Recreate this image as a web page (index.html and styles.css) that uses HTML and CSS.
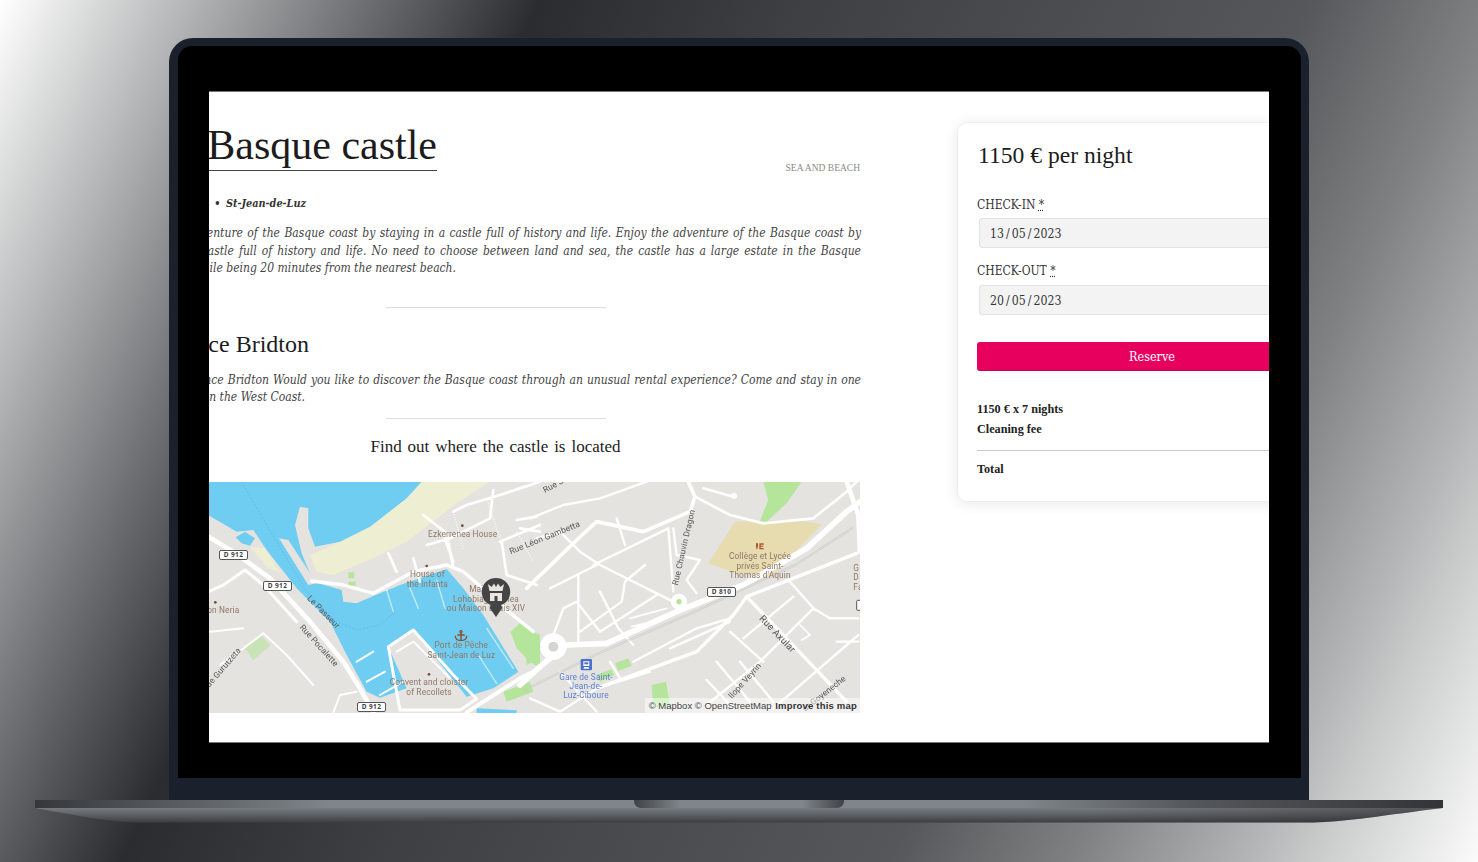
FILE: index.html
```html
<!DOCTYPE html>
<html lang="en">
<head>
<meta charset="utf-8">
<title>Basque castle</title>
<link rel="stylesheet" href="styles.css">
</head>
<body>
<div class="stage">
  <div class="lid">
    <div class="bezel">
      <div class="screen">
        <main class="article">
          <header class="head">
            <h1 class="title">The Basque castle</h1>
            <span class="tag">SEA AND BEACH</span>
          </header>
          <p class="place">Pyrenees-Atlantiques&nbsp; •&thinsp; St-Jean-de-Luz</p>
          <p class="para">
            <span class="ln">Enjoy the adventure of the Basque coast by staying in a castle full of history and life. Enjoy the adventure of the Basque coast by</span>
            <span class="ln">staying in a castle full of history and life. No need to choose between land and sea, the castle has a large estate in the Basque</span>
            <span class="ln end end-a">country while being 20 minutes from the nearest beach.</span>
          </p>
          <hr class="rule rule-a">
          <h2 class="sub">Residence Bridton</h2>
          <p class="para para-b">
            <span class="ln">At the Residence Bridton Would you like to discover the Basque coast through an unusual rental experience? Come and stay in one</span>
            <span class="ln end end-b">of our castles on the West Coast.</span>
          </p>
          <hr class="rule rule-b">
          <h3 class="find">Find out where the castle is located</h3>
          <div class="map">
            <svg class="map-svg" width="651" height="231" viewBox="0 0 651 231" role="img" aria-label="Map of Saint-Jean-de-Luz">
              <rect width="651" height="231" fill="#e4e3e0"/>
              <g transform="translate(-9 -7) scale(.33333)">
                <path fill="#eeeed2" d="M665 20H870L770 85 620 200 520 250 400 300 350 290 330 240 420 200 510 155 600 85Z"/>
                <path fill="#eeeed2" d="M150 215 195 220 240 292 205 280Z"/>
                <path fill="#6fcdf2" d="M25 20H665L620 70 510 155 420 200 345 215 325 160 325 100 300 95 285 150 305 235 340 320 425 345 430 380 470 385 515 365 600 330 740 282 790 340 850 420 955 590 880 640 800 665 640 465 565 515 620 640 540 668 500 650 440 540 390 440 290 340 200 225 160 165 110 170 25 120Z"/>
                <path fill="#6fcdf2" d="M830 700 950 706V716H830Z"/>
                <path fill="#e4e3e0" d="M237 190 265 195 350 325 325 330Z"/>
                <path fill="#6fcdf2" d="M107 187 135 170 165 190 150 212 125 205Z"/>
                <path fill="#b5e59a" d="M135 520 180 478 212 510 160 556Z" opacity=".6"/>
                <path fill="#b5e59a" d="M445 292h18v18h-18zM445 320h22v12h-22z"/>
                <path fill="#b5e59a" d="M932 470 960 445 1020 480V580L990 560 950 520Z"/>
                <path fill="#b5e59a" d="M910 650 990 620 1000 650 920 680Z"/>
                <g fill="none" stroke="#fff" stroke-linecap="round" stroke-linejoin="round">
                  <path stroke-width="14" d="M25 185 100 230 210 310 330 440 430 560 480 640 520 712"/>
                  <path stroke-width="9" d="M25 350 70 330 135 285 190 330 290 440"/>
                  <path stroke-width="6" d="M30 470 130 460M60 570 130 520 190 475 260 540 340 630"/>
                  <path stroke-width="10" d="M335 318 430 330 520 355 640 290 740 270 790 290 860 350 925 410 1000 470"/>
                  <path stroke-width="8" d="M565 235 590 290M640 250 660 320M670 120 740 175 760 280M680 210 750 190 870 130 880 45M760 110 800 90 900 60 1020 20M900 200 1020 150M905 200 920 300 1010 330M950 135 1010 125M960 160 1020 170M730 180 760 260"/>
                  <path stroke-width="6" d="M470 560 520 530M500 620 555 590M540 660 610 620"/>
                  <path stroke-width="9" d="M565 515 640 465 760 600 830 672 780 705H600L565 515"/>
                  <path stroke-width="6" d="M590 530 640 500 750 610"/>
                  <path stroke-width="12" d="M800 712 960 610 1020 580"/>
                  <path stroke-width="6" d="M400 712 420 660 470 650"/>
                </g>
                <g fill="none" stroke="#fff" stroke-width="4" stroke-linecap="round" opacity=".6">
                  <path d="M860 460 940 580M835 540 890 625"/>
                  <path d="M560 345 580 410M630 340 655 400M710 315 735 400"/>
                </g>
                <g fill="none" stroke="#fff" stroke-width="4" stroke-dasharray="3 5" opacity=".9">
                  <path d="M760 110 790 220M860 70 900 190M950 170 1000 260"/>
                </g>
                <path fill="none" stroke="#59b4dc" stroke-width="2" stroke-dasharray="6 5" d="M125 20 200 150 320 350 410 440 470 465 540 450 585 410"/>
                <circle cx="787" cy="152" r="4" fill="#6f4a37"/><circle cx="680" cy="273" r="4" fill="#6f4a37"/><circle cx="46" cy="382" r="4" fill="#6f4a37"/><circle cx="687" cy="598" r="4" fill="#6f4a37"/>
                <g class="lbl-brown">
                  <text x="788" y="185" text-anchor="middle">Ezkerrenea House</text>
                  <text x="682" y="306" text-anchor="middle">House of</text>
                  <text x="682" y="335" text-anchor="middle">the Infanta</text>
                  <text x="850" y="351" text-anchor="middle">Maison</text>
                  <text x="858" y="380" text-anchor="middle">Lohobiague Enea</text>
                  <text x="858" y="408" text-anchor="middle">ou Maison Louis XIV</text>
                  <text x="70" y="414" text-anchor="middle">on Neria</text>
                  <text x="784" y="520" text-anchor="middle">Port de Pêche</text>
                  <text x="784" y="549" text-anchor="middle">Saint-Jean de Luz</text>
                  <text x="687" y="630" text-anchor="middle">Convent and cloister</text>
                  <text x="687" y="659" text-anchor="middle">of Recollets</text>
                </g>
                <g class="lbl-road">
                  <text transform="translate(320 372) rotate(45)">Le Passeur</text>
                  <text transform="translate(298 458) rotate(48)">Rue Pocalette</text>
                  <text transform="translate(28 638) rotate(-49)">de Gurutzeta</text>
                </g>
                <path fill="none" stroke="#8a4d2d" stroke-width="4" d="M783 468v28M772 480 h22M766 482c0 14 10 14 17 14s17 0 17-14"/>
                <circle cx="783" cy="470" r="4" fill="none" stroke="#8a4d2d" stroke-width="3"/>
              </g>
              <g transform="translate(321 -7) scale(.33333)">
                <path fill="#e6dcb0" d="M615 140 800 135 875 148 730 300 620 295 535 265Z"/>
                <path fill="#b5e59a" d="M700 20H815L770 85 710 140 690 138 715 75Z"/>
                <path fill="#b5e59a" d="M-20 480 30 520 25 555 -10 570ZM255 565 295 550 305 572 265 588ZM200 600 245 582 252 600 210 620ZM365 630 408 620 420 690 370 700Z"/>
                <g fill="none" stroke="#fff" stroke-linecap="round" stroke-linejoin="round">
                  <path stroke-width="17" d="M-30 630 30 575 110 510 230 505 440 410 640 330 830 220 950 110 990 80"/>
                  <path stroke-width="11" d="M475 20 495 65 480 110 340 170 200 140 140 195 -10 340"/>
                  <path stroke-width="8" d="M495 65 600 120 700 145 850 130 950 50 980 20M520 40 610 65"/>
                  <path stroke-width="14" d="M950 20 985 120 990 230"/>
                  <path stroke-width="10" d="M650 365 980 235M650 365 950 680M650 365 610 420 500 530 200 640"/>
                  <path stroke-width="7" d="M0 130 100 90 210 70 350 20M20 190 90 170 150 230 210 270 440 385M190 270 415 160 430 350M200 270 60 340M380 360 210 470 140 380 100 400 70 480M145 300V500M345 270 285 320 275 380 150 470M210 350 265 460 310 510"/>
                  <path stroke-width="7" d="M430 160 440 240 510 255 470 315 500 355M260 130 285 210"/>
                  <path stroke-width="7" d="M600 470 700 560M640 490 790 365M850 400 690 560 530 690M855 405 780 320M850 400 900 430H985M560 560 660 680M630 560 730 680M530 615 610 700M985 480 730 700M310 560 500 460 600 430M420 520 600 440M920 500 985 500"/>
                  <path stroke-width="5" d="M300 430 410 400M305 455 410 430M810 450 840 480 815 495"/>
                  <path stroke-width="7" d="M90 590 200 710M0 670 90 710 200 640 360 590M240 560 270 610"/>
                </g>
                <circle cx="612" cy="62" r="9" fill="#fff"/>
                <circle cx="447" cy="380" r="24" fill="#fff"/><circle cx="447" cy="380" r="8" fill="#b5e59a"/>
                <circle cx="70" cy="515" r="40" fill="#fff"/><circle cx="70" cy="515" r="15" fill="#d6d5d2"/>
                <path fill="none" stroke="#c8c7c4" stroke-width="2" d="M-20 650 200 540 500 410 800 270 970 160M-20 645 200 535 500 405 800 265 970 155"/>
                <g class="lbl-road">
                  <text transform="translate(45 54) rotate(-29)">Rue Sa</text>
                  <text transform="translate(-58 238) rotate(-22)">Rue Léon Gambetta</text>
                  <text transform="translate(443 332) rotate(-77)">Rue Chauvin Dragon</text>
                  <text class="lbl-big" transform="translate(686 432) rotate(46)">Rue Axular</text>
                  <text transform="translate(606 672) rotate(-48)">llope Veyrin</text>
                  <text transform="translate(826 710) rotate(-38)">ur Goyeneche</text>
                </g>
                <g class="lbl-brown">
                  <text x="690" y="253" text-anchor="middle">Collège et Lycée</text>
                  <text x="690" y="281" text-anchor="middle">privés Saint-</text>
                  <text x="690" y="309" text-anchor="middle">Thomas d'Aquin</text>
                  <text x="970" y="288">G</text><text x="970" y="316">D</text><text x="970" y="344">Fa</text>
                </g>
                <path fill="#a9562a" d="M678 205h6v9l-2 9h-2l-2-9zM688 205h13v4h-9v3h8v3h-8v4h9v4h-13z"/>
                <g class="lbl-blue">
                  <text x="168" y="614" text-anchor="middle">Gare de Saint-</text>
                  <text x="168" y="642" text-anchor="middle">Jean-de-</text>
                  <text x="168" y="669" text-anchor="middle">Luz-Ciboure</text>
                </g>
                <rect x="152" y="552" width="34" height="34" rx="4" fill="#4a6fd0"/>
                <path fill="#fff" d="M160 559h18v14h-18zM163 576l-3 5h18l-3-5z"/><rect x="163" y="562" width="12" height="6" fill="#4a6fd0"/>
                <rect x="980" y="376" width="20" height="30" rx="3" fill="#fff" stroke="#555" stroke-width="3"/>
              </g>
            </svg>
            <span class="shield s1">D 912</span>
            <span class="shield s2">D 912</span>
            <span class="shield s3">D 912</span>
            <span class="shield s4">D 810</span>
            <svg class="pin" width="30" height="40" viewBox="0 0 30 40" aria-hidden="true">
              <path fill="#444446" d="M15 0C7 0 .8 6 .8 14c0 6 3.600 11 9 13l-1 3L15 39l6.200-9-1-3c5.400-2 9-7 9-13C29.200 6 23 0 15 0Z"/>
              <path fill="#e9e5e0" d="M7 6l3.500 3L13 5.500 15 9l2-3.500L19.500 9 23 6l-1.500 7h-13zM9 15h12v8H9z"/>
              <path fill="#444446" d="M13.500 18h3v5h-3z"/>
            </svg>
            <div class="attrib">© Mapbox © OpenStreetMap <b class="improve">Improve this map</b></div>
          </div>
        </main>
        <aside class="card">
          <h2 class="price">1150 € <span class="per">per night</span></h2>
          <label class="lab">CHECK-IN <abbr class="req">*</abbr></label>
          <div class="input">13 / 05 / 2023</div>
          <label class="lab lab-b">CHECK-OUT <abbr class="req">*</abbr></label>
          <div class="input input-b">20 / 05 / 2023</div>
          <button class="btn" type="button">Reserve</button>
          <p class="fee">1150 € x 7 nights</p>
          <p class="fee fee-b">Cleaning fee</p>
          <hr class="fee-rule">
          <p class="fee">Total</p>
        </aside>
      </div>
    </div>
  </div>
  <div class="base"><div class="notch"></div></div>
</div>
</body>
</html>
```
FILE: styles.css
```css
* { box-sizing: border-box; }
html, body { margin: 0; height: 100%; }
body {
  overflow: hidden;
  background: linear-gradient(116deg, #fff 0%, #b4b5b6 10%, #707174 19%, #2b2c2f 28.5%, #3e3f42 42%, #48494c 52.6%, #56575a 69%, #6a6b6d 73.6%, #808182 78.7%, #b5b6b7 88%, #c8c9c9 91%, #fbfbfb 100%);
}
.stage { width: 1478px; height: 862px; padding-top: 38px; }
.lid {
  width: 1140px; height: 762px; margin-left: 169px;
  padding: 8px 8px 0 9px;
  background: #1b212c;
  border-radius: 24px 24px 0 0;
}
.bezel {
  height: 732px; padding: 46px 32px 36px 31px;
  background: #000;
  border-radius: 14px 14px 0 0;
}
.screen {
  display: flex; gap: 96px;
  height: 650px; overflow: hidden;
  background: #fff;
  box-shadow: 0 1px 0 #777, 0 -1px 0 #777;
}
.article { flex: none; width: 731px; margin-left: -79px; padding-top: 30px; font-family: "DejaVu Serif Condensed", "DejaVu Serif", serif; color: #444; }
.head { display: flex; justify-content: space-between; align-items: flex-end; }
.title {
  width: 307px; margin: 0; padding-bottom: 2px;
  display: flex; justify-content: flex-end;
  font: 400 42px/46px "Liberation Serif", serif; color: #1c1c1c;
  white-space: nowrap;
  border-bottom: 1px solid #444;
}
.tag { font: 9.5px/12px "Liberation Serif", serif; color: #8b8b85; margin: 0 1px -3px 0; }
.place { display: flex; justify-content: flex-end; width: 176px; margin: 25px 0 0; white-space: pre; font-size: 10.8px; line-height: 16px; font-weight: 700; font-style: italic; color: #333; }
.para { margin: 13px 0 0; font-size: 12px; line-height: 17.5px; font-style: italic; }
.ln { display: block; text-align: justify; text-align-last: justify; white-space: nowrap; }
.end { display: flex; justify-content: flex-end; }
.end-a { width: 326px; }
.end-b { width: 175px; }
.rule { width: 220px; margin: 0 auto; border: 0; border-top: 1px solid #ddd; }
.rule-a { margin-top: 29px; }
.sub { display: flex; justify-content: flex-end; width: 179px; margin: 23px 0 0; font: 400 24px/26px "Liberation Serif", serif; color: #1c1c1c; white-space: nowrap; }
.para-b { margin-top: 15px; }
.rule-b { margin-top: 11px; }
.find { margin: 18px 0 0; font: 400 17px/20px "Liberation Serif", serif; color: #1c1c1c; text-align: center; word-spacing: 1.7px; }
.map { position: relative; width: 651px; height: 231px; margin: 25px 0 0 79px; overflow: hidden; }
.map-svg { display: block; filter: blur(.35px); }
.lbl-brown { font: 25px Roboto, sans-serif; letter-spacing: .4px; fill: #8f7767; }
.lbl-road { font: 25px Roboto, sans-serif; letter-spacing: .4px; fill: #555; }
.lbl-blue { font: 25px Roboto, sans-serif; letter-spacing: .4px; fill: #5b7fd6; }
.lbl-big { font-size: 29px; }
.shield {
  position: absolute; width: 29px; height: 10px;
  font: 700 6.5px/8px "Noto Sans", sans-serif; letter-spacing: .4px; text-align: center; color: #444;
  background: #fff; border: 1px solid #555; border-radius: 2px;
}
.s1 { left: 10px; top: 68px; }
.s2 { left: 54px; top: 99px; }
.s3 { left: 148px; top: 220px; }
.s4 { left: 498px; top: 105px; }
.pin { position: absolute; left: 272px; top: 96px; }
.attrib {
  position: absolute; right: 0; bottom: 0; height: 15px; padding: 0 3px 0 4px;
  font: 9.5px/15px "Liberation Sans", sans-serif; color: #444;
  background: rgba(255,255,255,.5);
}
.improve { color: #333; letter-spacing: .2px; margin-left: 1px; }
.card {
  flex: none; width: 388px; height: 380px; margin-top: 30px; padding: 18px 19px 0;
  background: #fff; border: 1px solid #eee; border-radius: 10px;
  box-shadow: 0 2px 14px rgba(0,0,0,.09);
  font-family: "DejaVu Serif Condensed", "DejaVu Serif", serif; color: #333;
}
.price { margin: 0 0 0 1px; font: 400 23.6px/28px "Liberation Serif", serif; color: #1c1c1c; }
.per { font-weight: 400; }
.lab { display: block; margin-top: 28px; font-size: 12px; line-height: 16px; color: #333; }
.lab-b { margin-top: 15px; }
.req { text-decoration: underline dotted; }
.input {
  height: 30px; margin: 5px 0 0 2px; padding-left: 10px;
  font-size: 12.2px; line-height: 30px; color: #333; word-spacing: -1.4px;
  background: #f3f3f3; border: 1px solid #e2e2e2; border-radius: 3px;
}
.input-b { margin-top: 6px; }
.btn {
  display: block; width: 350px; height: 29px; margin: 27px 0 0; padding: 0;
  font: 12.5px "DejaVu Serif Condensed", "DejaVu Serif", serif; color: #fff;
  background: #e8005f; border: 0; border-bottom: 1px solid #b80a50; border-radius: 3px;
}
.fee { margin: 30px 0 0; font: 700 12.2px/16px "Liberation Serif", serif; color: #222; }
.fee-b { margin-top: 4px; }
.fee-rule { margin: 13px 0 10px; border: 0; border-top: 1px solid #ccc6cc; }
.fee-rule + .fee { margin-top: 0; }
.base {
  position: relative; width: 1408px; height: 23px; margin-left: 35px;
  background: linear-gradient(90deg, #35373b 0%, #7f858a 21%, #7f858a 70%, #55585b 82%, #333437 100%) top / 100% 8px no-repeat;
}
.base::after {
  content: ""; position: absolute; left: 0; right: 0; top: 8px; bottom: 0;
  background: linear-gradient(90deg, transparent 75%, rgba(40,40,42,.45) 100%), linear-gradient(180deg, #767b80 0%, #5e6165 45%, #3a3b3e 100%);
  clip-path: path("M0 0H1408C1350 7 1310 14 1278 14.500H104C75 14.500 40 7 0 0Z");
}
.notch { position: absolute; left: 599px; top: 0; width: 210px; height: 8px; border-radius: 0 0 7px 7px; background: linear-gradient(90deg, #404246 0%, #7f858a 22%, #7f858a 80%, #404246 100%); }
```
